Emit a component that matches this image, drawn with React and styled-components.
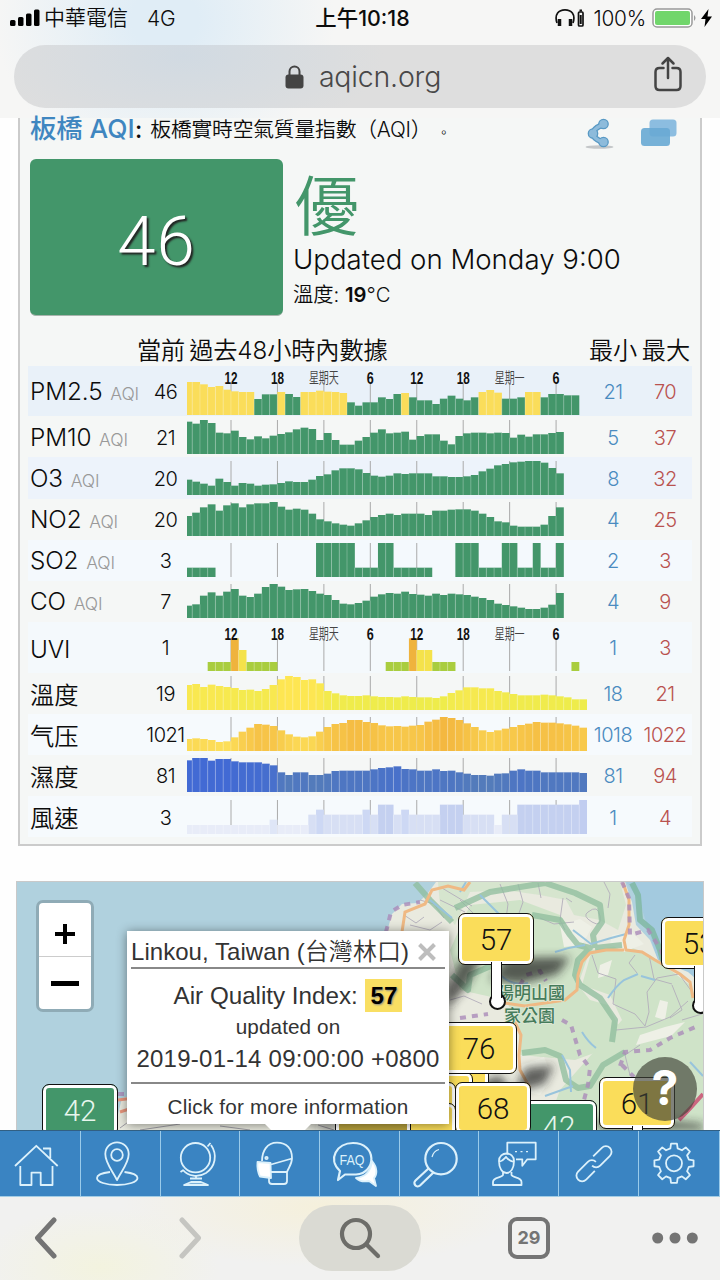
import React from "react";
import styled, { createGlobalStyle } from "styled-components";

const GREEN = "#43966a";
const YELLOW = "#fadd5a";
const BAR = 7.74;
const FIRST = 5.2;

const TICKS = ["12", "18", "星期天", "6", "12", "18", "星期一", "6"];

const so2 = [
  ...Array(4).fill(28), ...Array(13).fill(0), ...Array(5).fill(102), 28, 28, 28, 102, 102,
  ...Array(5).fill(28), 0, 0, 0, 102, 102, 102, 28, 28, 28, 102, 102, 28, 28, 102, 28, 28, 102,
];

const uvi = Array(52).fill(0);
[3, 4, 5, 8, 9, 10, 11, 26, 27, 28, 32, 33, 34, 50].forEach((i) => (uvi[i] = 27));
[6, 29].forEach((i) => (uvi[i] = 98));
[7, 30, 31].forEach((i) => (uvi[i] = 63));

const wind = [
  ...Array(11).fill(27), 43, ...Array(4).fill(27), 58, 73, ...Array(5).fill(58), 73, 58, 88, 88,
  58, 73, ...Array(4).fill(58), 88, 88, 88, ...Array(4).fill(58), 27, 58, 58, ...Array(8).fill(88), 103,
];

const mix = (from, to, min, max) => (v) => {
  const k = Math.max(0, Math.min(1, (v - min) / (max - min)));
  return `rgb(${from.map((c, i) => Math.round(c + (to[i] - c) * k)).join(",")})`;
};

const green = () => GREEN;
const windColor = (v) =>
  ({ 27: "#e8ecf8", 43: "#dfe6f7", 58: "#d7dff4", 73: "#cdd8f4", 88: "#c4d0f0", 103: "#c1cdf0" })[v];

const ROWS = [
  {
    name: "PM2.5", aqi: true, now: 46, min: 21, max: 70, ticks: true, bg: "#e9f1f9",
    color: (v) => (v > 63 ? YELLOW : GREEN),
    data: [99, 99, 92, 84, 87, 76, 71, 69, 69, 48, 62, 62, 69, 63, 54, 69, 69, 73, 70, 69, 66, 38, 28, 38, 38, 53, 48, 63, 66, 53, 44, 44, 33, 49, 58, 49, 44, 53, 69, 75, 67, 49, 49, 53, 69, 69, 53, 63, 63, 59, 59],
  },
  {
    name: "PM10", aqi: true, now: 21, min: 5, max: 37, color: green,
    data: [97, 91, 102, 93, 64, 62, 70, 51, 44, 53, 47, 55, 60, 65, 74, 79, 75, 42, 63, 42, 28, 28, 40, 51, 64, 74, 62, 64, 67, 43, 54, 59, 59, 40, 29, 54, 62, 64, 64, 62, 64, 63, 49, 58, 52, 59, 59, 63, 66],
  },
  {
    name: "O3", aqi: true, now: 20, min: 8, max: 32, bg: "#edf3fb", color: green,
    data: [46, 40, 34, 28, 49, 39, 28, 36, 34, 28, 31, 32, 36, 41, 39, 39, 46, 57, 62, 74, 80, 80, 77, 66, 58, 55, 58, 65, 63, 65, 65, 65, 56, 56, 54, 54, 56, 60, 71, 79, 89, 93, 98, 100, 103, 103, 97, 81, 65],
  },
  {
    name: "NO2", aqi: true, now: 20, min: 4, max: 25, color: green,
    data: [60, 70, 86, 95, 76, 92, 98, 86, 95, 98, 98, 102, 88, 79, 82, 79, 67, 50, 44, 38, 34, 31, 38, 47, 57, 63, 67, 63, 67, 67, 67, 63, 76, 76, 79, 80, 80, 76, 67, 57, 44, 41, 31, 28, 28, 28, 34, 60, 86],
  },
  { name: "SO2", aqi: true, now: 3, min: 2, max: 3, bg: "#f4f9fd", color: green, data: so2 },
  {
    name: "CO", aqi: true, now: 7, min: 4, max: 9, color: green,
    data: [37, 41, 67, 77, 67, 79, 87, 67, 63, 73, 93, 102, 94, 84, 86, 87, 81, 73, 69, 54, 43, 41, 45, 52, 64, 71, 75, 73, 79, 72, 70, 67, 73, 69, 73, 71, 69, 64, 60, 54, 43, 39, 35, 31, 27, 27, 31, 40, 75],
  },
  {
    name: "UVI", now: 1, min: 1, max: 3, ticks: true, bg: "#f4f9fc", data: uvi,
    color: (v) => (v > 90 ? "#efb33d" : v > 50 ? "#f4e24b" : "#a9cd3f"),
  },
  {
    name: "溫度", now: 19, min: 18, max: 21, color: mix([238, 236, 75], [254, 230, 82], 38, 95),
    data: [75, 78, 69, 76, 72, 69, 66, 60, 61, 57, 63, 75, 92, 102, 99, 90, 92, 80, 57, 50, 44, 42, 42, 44, 41, 39, 39, 38, 41, 39, 38, 38, 36, 41, 51, 59, 68, 68, 65, 65, 57, 53, 48, 44, 44, 44, 46, 44, 41, 38, 32, 32],
  },
  {
    name: "气压", now: 1021, min: 1018, max: 1022, bg: "#f6fafd",
    color: mix([252, 222, 88], [244, 184, 64], 30, 102),
    data: [36, 38, 36, 33, 27, 29, 41, 58, 70, 81, 79, 75, 62, 50, 43, 41, 44, 58, 72, 81, 84, 93, 93, 87, 84, 77, 74, 75, 73, 76, 78, 88, 94, 102, 99, 93, 83, 72, 62, 57, 62, 67, 72, 78, 82, 87, 85, 85, 83, 80, 76, 70],
  },
  {
    name: "濕度", now: 81, min: 81, max: 94, color: mix([84, 124, 186], [66, 106, 212], 49, 95),
    data: [95, 103, 103, 94, 99, 99, 92, 89, 89, 89, 85, 80, 59, 51, 59, 59, 51, 51, 55, 63, 64, 64, 64, 64, 68, 72, 74, 77, 69, 68, 64, 64, 68, 63, 64, 59, 55, 51, 51, 49, 55, 56, 64, 68, 64, 64, 59, 59, 59, 59, 59, 57],
  },
  { name: "風速", now: 3, min: 1, max: 4, bg: "#f6fafd", color: windColor, data: wind },
];

const Chart = ({ row }) => {
  const h = row.ticks ? 49 : 34;
  return (
    <ChartSvg width="400" height={h} $drop={row.ticks ? 1.3 : 3.6}>
      {TICKS.map((t, i) => (
        <line key={i} x1={44 + i * 46.44} x2={44 + i * 46.44} y1={row.ticks ? 17 : 0} y2={h} stroke="#aaa" />
      ))}
      {row.data.map((v, i) => {
        const x = i === 0 ? 0 : FIRST + (i - 1) * BAR;
        const w = i === 0 ? FIRST : BAR;
        if (!v) return null;
        return (
          <g key={i}>
            <rect x={x} y={h - v / 3} width={w + 0.1} height={v / 3} fill={row.color(v)} />
            {i > 0 && row.data[i - 1] > 0 && (
              <line x1={x} x2={x} y1={h - Math.min(v, row.data[i - 1]) / 3} y2={h} stroke="#fff" strokeOpacity="0.25" />
            )}
          </g>
        );
      })}
      {row.ticks &&
        TICKS.map((t, i) => {
          const day = t.length > 2;
          const w = day ? 30 : t.length === 2 ? 13 : 7;
          return (
            <TickText
              key={i} $day={day} x={44 + i * 46.44 - w / 2} y={day ? 16.5 : 18}
              textLength={w} lengthAdjust="spacingAndGlyphs"
            >
              {t}
            </TickText>
          );
        })}
    </ChartSvg>
  );
};

const gearPath = () => {
  const pts = [];
  for (let i = 0; i < 8; i++) {
    [[-0.24, 15.3], [-0.15, 19.8], [0.15, 19.8], [0.24, 15.3]].forEach(([d, r]) => {
      const a = (i * Math.PI) / 4 + d;
      pts.push(`${(35 + r * Math.sin(a)).toFixed(2)} ${(33.3 - r * Math.cos(a)).toFixed(2)}`);
    });
  }
  return `M${pts.join("L")}Z`;
};

const NavText = styled.text`
  font: 14px "Liberation Sans", sans-serif;
  fill: #dcf1fb;
  stroke: none;
`;

const NAV = [
  <path d="M15 36 36.3 15.8 57.7 36M43 18.5h7.3V28M20.3 36v19h11.2V42.6h9.2V55h11.8V36" />,
  <>
    <circle cx="36" cy="25" r="5.8" />
    <path d="M36 50C31 40 24.3 33 24.3 24a11.7 11.7 0 0 1 23.4 0C47.7 33 41 40 36 50Z" />
    <path d="M29 42c-8 1-13 3.3-13 6 0 4 9 7 20 7s20.5-3 20.5-7c0-2.7-5-5-13-6" />
  </>,
  <>
    <circle cx="34.5" cy="27.7" r="14.7" />
    <path d="M46.5 16.5 49.5 13M50 15C57 25 54 37 45 43 37 48 27 46 22 40M19.5 42l3-2" />
    <path d="M35 46v3M29 48.5h12M30 52l-7 3h24l-7-3Z" fill="#dcf1fb" fillOpacity=".4" />
  </>,
  <>
    <path d="M22 31c0-10 5-18.3 15-18.3S52 19 52 28c0 6-3 9-5 14v9q0 3-3 3H32q-3 0-3-3v-3M31 34.5l21-6M31 42h16" />
    <circle cx="26.5" cy="28" r="1.2" />
    <path d="M17.5 32l13 1 .5 15-11-1.5c-2-4-3-9-2.5-14.5Z" fill="#fff" />
  </>,
  <>
    <path d="M52 31c6 7 5 14 2 17l2 8-7-5c-5 1-10 0-13-3 9-1 15-7 16-17Z" fill="#fff" />
    <path d="M20 41C7 29 17 13 33 13c24 0 24 30 3 31.5l-11 0-7 5.5Z" fill="#3a84c2" strokeWidth="2.2" />
    <NavText x="19.5" y="35" textLength="25" lengthAdjust="spacingAndGlyphs">FAQ</NavText>
  </>,
  <>
    <circle cx="41" cy="28.7" r="15.7" strokeWidth="2.2" />
    <path d="M32 27c1-4 3-6.5 7-7.5" strokeWidth="1.2" />
    <path d="M29 38 15.5 50.5a3.3 3.3 0 0 0 4.5 5L33.5 42.5" strokeWidth="2.2" />
  </>,
  <>
    <path d="M28.3 24.5V12.7h28.4v16.6h-8.4l-5 6.4v-6.4H37" />
    <path d="M36 21.7h2M41.5 21.7h2M47 21.7h2" strokeWidth="1.2" />
    <path d="M20 31c0-10 15-10 15 0 0 7-3 12-7.5 12S20 38 20 31ZM20 32c4-1 6-4 7-5 2 3 5 4 8 5M24 42v3c-1 3-10 2-10 7v3h28.5v-3c0-5-9-4-10-7v-3" />
  </>,
  <g transform="rotate(-45 35 33.7)">
    <path d="M39.5 28H51.8a5.7 5.7 0 0 1 0 11.4H38a5.7 5.7 0 0 1-5.7-5.7M30.5 39.4H18.2a5.7 5.7 0 0 1 0-11.4H32a5.7 5.7 0 0 1 5.7 5.7" />
  </g>,
  <>
    <path d={gearPath()} />
    <circle cx="35" cy="33.3" r="8" />
  </>,
];

const MARKERS = [
  { x: 413, y: 1067, value: "" },
  { x: 397, y: 1072, value: "" },
  { x: 380, y: 1082, value: "" },
  { x: 380, y: 1103, value: "" },
  { x: 335, y: 1105, value: "", dim: true },
  { x: 458, y: 913, value: 57, pin: true },
  { x: 661, y: 917, value: 53, pin: true },
  { x: 441, y: 1022, value: 76 },
  { x: 521, y: 1100, value: 42, good: true },
  { x: 455, y: 1082, value: 68 },
  { x: 599, y: 1077, value: 61, pin: true },
  { x: 42, y: 1084, value: 42, good: true },
];

const MapArt = () => (
  <svg width="686" height="248" viewBox="17 882 686 248">
    <defs>
      <filter id="soft" x="-30%" y="-60%" width="160%" height="220%">
        <feGaussianBlur stdDeviation="5" />
      </filter>
    </defs>
    <path fill="#b0d1de" d="M17 882h686v248H17z" />
    <path fill="#a3cadf" d="M626 882h77v110l-45-30-18-60z" />
    <path fill="#e9eadf" d="M386 935 392 914 402 904 418 903 428 893 436 882H625L632 902 636 925 650 940 658 960 688 972 703 985V1130H114L122 1098 150 1092 440 1000Z" />
    <g fill="#cfe3c8">
      <path d="M438 882H620L626 905 618 930 600 920 574 915 566 900 540 895 505 890 470 892 455 925 440 905Z" opacity=".75" />
      <path d="M470 905 520 900 560 915 575 935 590 950 578 985 590 1000 608 1005 618 1025 608 1048 575 1060 520 1055 518 1020 505 1000 460 990 450 950Z" />
      <path d="M592 950 625 945 650 955 670 970 690 985 703 1010V1130H545L560 1090 600 1045 622 1020 610 995 582 985Z" />
    </g>
    <g fill="#eef0e6">
      <path d="M560 925l20-6 12 8-10 18-18 2zM612 935l20-3 12 12-20 8-14-8zM640 1035l25-8 20-5-14 14-35 9zM470 920l25 5 8 12-20 6-15-8zM600 965l12-5-4 15-10 3zM520 1065l24-8 8 20-12 18-22-4zM660 1000l8 2-3 18-10-3z" />
    </g>
    <g fill="none" stroke="#b3aebb" strokeWidth="1" opacity=".9">
      <path d="M404 915l12 8 8-6M410 925l20 5 12-8M420 900l14 4 10 14M440 900l25 12M442 888l30 18M460 900l18 18M500 884l8 20-2 15M518 884l5 18-5 14M538 883l3 15M563 898l-3 22 5 10M566 898l6 4M588 912q10-8 12 4t-8 6-4-10M604 882l6 12-2 14M540 918l14 6 20-2" />
      <path d="M592 955l6 18 18 6-3 25 22 10 10 12 4-14-2-20 10-14 22-4 16 22 7 18-20 6M649 955l5 24 18 5M616 1030l30-3 24-10 18-16M672 985l10 25-12 8M635 955l-6 8 8 10M450 1000l14-4 18 8M640 1045l-15 10 5 20" />
      <path d="M120 1128l30-22M140 1130l40-6M220 1126l30 4M318 1125l16 5" stroke="#96939c" />
    </g>
    <g fill="none" stroke="#8ebd9d" strokeWidth="6" strokeLinejoin="round" opacity=".75">
      <path d="M415 883 430 900 452 922M455 908 490 892 545 883M545 883 575 893 600 905 602 922 593 935 595 948M532 915 560 920 570 935 578 945 590 948 578 960 575 975 580 985 600 998 615 1020 612 1042" />
      <path d="M452 975 468 990 470 975 500 962 530 955M522 1053 545 1050 560 1056 566 1080 578 1088 590 1086 603 1065 625 1052M595 948 622 945" />
      <path d="M632 883 638 895 640 920 652 930 660 950 664 965" stroke="#7bb69c" />
    </g>
    <g fill="none" stroke="#98c4dc" strokeWidth="2">
      <path d="M430 900l22 18M480 895l20 20M555 952q15-5 30-7M573 930l18 14 20-6 15-4M562 1055l8 15 1 22M608 998q8-12 16-18l14-6M641 976l14 4M582 1032q6 10 14 16M500 975q14 12 28 8M545 1096l28-10M690 1062l13 14M466 882l-6 10" />
    </g>
    <g fill="none" stroke="#efb984" strokeWidth="3">
      <path d="M402 932 405 912 425 904 432 890 448 886 464 890 470 882M623 883 629 900 629 925 624 940 626 950 642 952 655 960 680 974 690 982 693 998M624 950 606 950 590 953 582 962 578 975 577 990 565 1000 525 1006 505 1003M514 1020 521 1035 519 1055 520 1070 530 1088" />
      <path d="M118 1100 150 1096M120 1112l24-8-4 18" stroke="#e7957c" />
    </g>
    <g fill="none" stroke="#aa8bb9" strokeWidth="4" strokeDasharray="6 6" opacity=".8">
      <path d="M386 932 391 912 402 905 420 902M622 882 629 898 630 935 648 930 660 948 665 960M562 1020 571 1025 580 1055 590 1068 588 1085 584 1100M620 1066 625 1052 650 1050 670 1038 700 1025M460 1018l28-4M520 985l6-10 14-4 6 10M622 1065l12 12M118 1094h40" />
    </g>
    <path d="M703 1094q-12 14-24 26" fill="none" stroke="#cc6680" strokeWidth="4" />
    <g filter="url(#soft)" fill="#222" opacity=".7">
      <path d="M490 980 506 958 570 957 558 974 520 984Z" />
      <path d="M446 990 460 960 482 958 468 984 448 1008Z" />
      <path d="M515 1092 525 1068 554 1065 545 1084Z" />
      <path d="M449 1095 500 1075 510 1090Z" />
      <path d="M310 1128 330 1124 343 1130ZM596 1128 603 1115 703 1124 703 1130Z" />
    </g>
    <PlaceText x="497" y="999">陽明山國</PlaceText>
    <PlaceText x="504" y="1022">家公園</PlaceText>
  </svg>
);

export default function App() {
  return (
    <>
      <Global />
      <Page>
        <Header>
          <StatusBar>
            <StatusSide>
              <svg width="30" height="18" viewBox="0 0 30 18">
                <rect x="0" y="11" width="5.5" height="6" rx="1.5" />
                <rect x="8" y="8" width="5.5" height="9" rx="1.5" />
                <rect x="16" y="4.5" width="5.5" height="12.5" rx="1.5" />
                <rect x="24" y="0.5" width="5.5" height="16.5" rx="1.5" />
              </svg>
              <Carrier>中華電信</Carrier>
              <Network>4G</Network>
            </StatusSide>
            <Clock>上午10:18</Clock>
            <StatusSide $end>
              <svg width="30" height="20" viewBox="0 0 30 20" fill="none" stroke="#111" strokeWidth="1.7">
                <path d="M2 15C-1 6 4 1.8 10 1.8S21 6 18 15" />
                <path d="M4.5 11v7M15.5 11v7" strokeWidth="3.5" />
                <rect x="23.5" y="4" width="4.5" height="14" rx="1" />
                <path d="M24.5 2.5h2.5M25.7 7v9" strokeWidth="2" />
              </svg>
              <Percent>100%</Percent>
              <svg width="49" height="20" viewBox="0 0 49 20">
                <rect x="1" y="1" width="39" height="18" rx="4" fill="#fff" stroke="#999" strokeWidth="1.5" />
                <rect x="3" y="3" width="35" height="14" rx="2" fill="#71d66b" />
                <path d="M42 7q3 3 0 6z" fill="#999" />
              </svg>
              <svg width="12" height="18" viewBox="0 0 12 18">
                <path d="M7.5 0 0 10h4.5L3.5 18 11 7.5H6.5z" />
              </svg>
            </StatusSide>
          </StatusBar>
          <AddressBar>
            <svg width="19" height="24" viewBox="0 0 19 24">
              <rect x="0.5" y="9.5" width="18" height="14" rx="3" fill="#444" />
              <path d="M4.5 10V6.5a5 5 0 0 1 10 0V10" fill="none" stroke="#444" strokeWidth="2" />
            </svg>
            <Url>aqicn.org</Url>
            <ShareButton>
              <svg width="28" height="36" viewBox="0 0 28 36" fill="none" stroke="#444" strokeWidth="2.5" strokeLinecap="round" strokeLinejoin="round">
                <path d="M9.5 12H5.5q-4 0-4 4v14q0 4 4 4h17q4 0 4-4V16q0-4-4-4h-4M14 22V2M8.5 7.5 14 2l5.5 5.5" />
              </svg>
            </ShareButton>
          </AddressBar>
        </Header>

        <Card>
          <TitleRow>
            <City>板橋 AQI</City>
            <Colon>:</Colon>
            <Subtitle>板橋實時空氣質量指數（AQI） <Stop>。</Stop></Subtitle>
            <TitleIcons>
              <svg width="30" height="32" viewBox="0 0 30 32">
                <ellipse cx="14.5" cy="29" rx="14" ry="1.8" fill="#c4c7c9" />
                <path d="M17 7Q8 11 8 15.5T17 24" fill="none" stroke="#5899c4" strokeWidth="6" />
                <g fill="#8dbbdb" stroke="#5899c4" strokeWidth="1.3">
                  <circle cx="18.5" cy="6" r="4.7" />
                  <circle cx="8" cy="15.5" r="4.7" />
                  <circle cx="18.5" cy="24" r="4.7" />
                </g>
                <path d="M17 7Q8 11 8 15.5T17 24" fill="none" stroke="#8dbbdb" strokeWidth="3.5" />
              </svg>
              <svg width="38" height="30" viewBox="0 0 38 30">
                <rect x="9.5" y="1.5" width="27" height="17" rx="3.5" fill="#8cbde0" />
                <rect x="1" y="10" width="29" height="18" rx="3.5" fill="#68a8d4" opacity=".9" />
              </svg>
            </TitleIcons>
          </TitleRow>
          <Summary>
            <AqiBox>46</AqiBox>
            <SummaryText>
              <Level>優</Level>
              <Updated>Updated on Monday 9:00</Updated>
              <Temp>溫度: <b>19</b>°C</Temp>
            </SummaryText>
          </Summary>
          <TableHead>
            <span>當前</span>
            <span>過去48小時內數據</span>
            <HeadEnd>最小 最大</HeadEnd>
          </TableHead>
          {ROWS.map((row) => (
            <Row key={row.name} $tall={row.ticks} $bg={row.bg}>
              <Name>
                {row.name} {row.aqi && <small>AQI</small>}
              </Name>
              <Value>{row.now}</Value>
              <Chart row={row} />
              <Value $color="#4a8bc0">{row.min}</Value>
              <Value $color="#b9524f">{row.max}</Value>
            </Row>
          ))}
        </Card>

        <MapBox>
          <MapArt />
          {MARKERS.map((m, i) => (
            <Marker key={i} style={{ left: m.x - 17, top: m.y - 882 }} $good={m.good} $dim={m.dim} $pin={m.pin}>
              {m.value}
            </Marker>
          ))}
          <Zoom>
            <ZoomButton>
              <svg width="20" height="20"><path d="M10 0v20M0 10h20" stroke="#000" strokeWidth="4" /></svg>
            </ZoomButton>
            <ZoomButton>
              <svg width="28" height="5"><path d="M0 2.5h28" stroke="#000" strokeWidth="5" /></svg>
            </ZoomButton>
          </Zoom>
          <Popup>
            <PopupTitle>
              Linkou, Taiwan (台灣林口)
              <svg width="18" height="18"><path d="M1.5 1.5l15 15M16.5 1.5l-15 15" stroke="#bdbdbd" strokeWidth="4" /></svg>
            </PopupTitle>
            <PopupIndex>Air Quality Index: <mark>57</mark></PopupIndex>
            <PopupSmall>updated on</PopupSmall>
            <PopupDate>2019-01-14 09:00:00 +0800</PopupDate>
            <PopupLink>Click for more information</PopupLink>
          </Popup>
          <Help>
            ?
            <HelpTail width="18" height="10" viewBox="0 0 18 10">
              <path d="M0 1 9 0q2 6 9 8-10 3-18-7z" fill="#5d6054" />
            </HelpTail>
          </Help>
        </MapBox>

        <Nav>
          {NAV.map((icon, i) => (
            <NavItem key={i}>
              <svg width="79" height="66" viewBox="0 1 79 66" fill="none" stroke="#dcf1fb" strokeWidth="1.8" strokeLinejoin="round">
                {icon}
              </svg>
            </NavItem>
          ))}
        </Nav>

        <Footer>
          <svg width="26" height="42" viewBox="0 0 26 42" fill="none" stroke="#747474" strokeWidth="5" strokeLinecap="round" strokeLinejoin="round">
            <path d="M20 3 3.5 21 20 39" />
          </svg>
          <ForwardIcon width="26" height="42" viewBox="0 0 26 42" fill="none" stroke="#c5c5c1" strokeWidth="5" strokeLinecap="round" strokeLinejoin="round">
            <path d="M5 3l16.5 18L5 39" />
          </ForwardIcon>
          <SearchPill>
            <svg width="42" height="42" viewBox="0 0 42 42" fill="none" stroke="#6d6d69" strokeWidth="4.2" strokeLinecap="round">
              <circle cx="17" cy="17" r="14" />
              <path d="M27.5 27.5 39 39" />
            </svg>
          </SearchPill>
          <Tabs>29</Tabs>
          <svg width="46" height="12" viewBox="0 0 46 12" fill="#747474">
            <circle cx="5.7" cy="6" r="5.5" />
            <circle cx="23" cy="6" r="5.5" />
            <circle cx="40.3" cy="6" r="5.5" />
          </svg>
        </Footer>
      </Page>
    </>
  );
}

const Global = createGlobalStyle`
  * { box-sizing: border-box; }
  body {
    margin: 0;
    background: #fefefe;
    font-family: Inter, "Noto Sans CJK TC", sans-serif;
    font-weight: 350;
    color: #0c0c0c;
  }
  svg { display: block; flex: none; }
`;

const Page = styled.div`
  width: 720px;
  height: 1280px;
  overflow: hidden;
  display: flex;
  flex-direction: column;
`;

const Header = styled.header`
  height: 118px;
  flex: none;
  background: radial-gradient(ellipse 170px 150px at 165px 20px, #e0edf6 20%, transparent), #f6f6f5;
`;

const StatusBar = styled.div`
  height: 45px;
  padding: 0 7px 9px 10px;
  display: grid;
  grid-template-columns: 1fr auto 1fr;
  align-items: center;
  white-space: nowrap;
`;

const StatusSide = styled.div`
  display: flex;
  align-items: center;
  justify-content: ${(p) => (p.$end ? "flex-end" : "flex-start")};
`;

const Carrier = styled.span`
  margin-left: 4px;
  font-size: 21px;
  line-height: 24px;
`;

const Network = styled.span`
  margin-left: 19px;
  font-size: 21px;
  letter-spacing: -0.3px;
`;

const Clock = styled.span`
  padding-left: 2px;
  font-size: 21.4px;
  font-weight: 500;
  line-height: 24px;
`;

const Percent = styled.span`
  margin: 0 6px 0 8px;
  font-size: 20.8px;
  letter-spacing: -0.2px;
`;

const AddressBar = styled.div`
  height: 63px;
  margin: 0 14px;
  padding-left: 6px;
  border-radius: 32px;
  background: radial-gradient(ellipse 200px 90px at 170px 10px, #d1dae2, transparent), #dedede;
  display: flex;
  align-items: center;
  justify-content: center;
  gap: 15px;
  position: relative;
`;

const Url = styled.span`
  padding-top: 1px;
  font-size: 28.5px;
  line-height: 34px;
  letter-spacing: -0.2px;
  color: #484848;
`;

const ShareButton = styled.div`
  position: absolute;
  right: 24px;
  top: 11px;
`;

const Card = styled.section`
  width: 684px;
  height: 728px;
  flex: none;
  margin-left: 18px;
  border: 2px solid #cbcbcb;
  border-top: 0;
  background: #f5f7f6;
  padding: 0 8px;
`;

const TitleRow = styled.div`
  height: 41px;
  padding: 0 14px 16px 2px;
  display: flex;
  align-items: center;
  white-space: nowrap;
`;

const City = styled.span`
  width: 105px;
  padding-bottom: 3px;
  font-size: 26.3px;
  line-height: 30px;
  font-weight: 500;
  color: #3f86c0;
`;

const Colon = styled.span`
  padding-bottom: 3px;
  font-size: 24px;
  font-weight: 500;
`;

const Subtitle = styled.span`
  margin-left: 8px;
  padding-top: 1px;
  font-size: 20.8px;
  line-height: 28px;
  letter-spacing: -0.2px;
`;

const Stop = styled.span`
  font-size: 13px;
`;

const TitleIcons = styled.div`
  margin-left: auto;
  padding-top: 6px;
  display: flex;
  gap: 25px;
`;

const Summary = styled.div`
  height: 157px;
  padding-left: 2px;
  display: flex;
  gap: 10px;
`;

const AqiBox = styled.div`
  width: 253px;
  height: 157px;
  border-radius: 6px;
  background: ${GREEN};
  border-bottom: 1px solid #a8b4ad;
  display: flex;
  align-items: center;
  justify-content: center;
  padding-top: 8px;
  color: #fff;
  font: 300 69px Roboto, sans-serif;
  letter-spacing: 1px;
  text-shadow: 2px 2px 2px #222;
`;

const SummaryText = styled.div`
  display: flex;
  flex-direction: column;
  white-space: nowrap;
`;

const Level = styled.div`
  height: 84px;
  margin-left: 1px;
  font-size: 65px;
  line-height: 96px;
  color: ${GREEN};
`;

const Updated = styled.div`
  height: 33px;
  font-size: 27.6px;
  line-height: 32px;
`;

const Temp = styled.div`
  font-size: 20.3px;
  line-height: 37px;

  b {
    font-weight: 600;
  }
`;

const TableHead = styled.div`
  height: 49.7px;
  padding: 20px 2px 0 109px;
  display: flex;
  gap: 4px;
  align-items: center;
  font-size: 24.2px;
  line-height: 28px;
  letter-spacing: -0.1px;
  white-space: nowrap;
`;

const HeadEnd = styled.span`
  margin-left: auto;
  word-spacing: -2px;
`;

const Row = styled.div`
  height: ${(p) => (p.$tall ? 50.6 : 41.15)}px;
  background: ${(p) => p.$bg || "transparent"};
  display: grid;
  grid-template-columns: 118px 39px 402px 52px 52px;
  align-items: center;
`;

const Name = styled.div`
  padding: 3px 0 0 2px;
  font-size: 24.3px;
  line-height: 32px;
  letter-spacing: -0.1px;
  white-space: nowrap;

  small {
    margin-left: 1px;
    font-size: 17.5px;
    color: #999;
  }
`;

const Value = styled.div`
  padding-top: 2px;
  text-align: center;
  font-size: 20px;
  letter-spacing: -0.5px;
  color: ${(p) => p.$color || "inherit"};
`;

const ChartSvg = styled.svg`
  align-self: end;
  margin-left: 2.3px;
  margin-bottom: ${(p) => p.$drop}px;
`;

const TickText = styled.text`
  font-family: "Liberation Sans", "Noto Sans CJK TC", sans-serif;
  font-size: ${(p) => (p.$day ? 15 : 16)}px;
  font-weight: ${(p) => (p.$day ? 350 : 700)};
  fill: ${(p) => (p.$day ? "#444" : "#111")};
`;

const MapBox = styled.section`
  width: 688px;
  height: 249px;
  flex: none;
  margin: 35px 0 0 16px;
  border: 1px solid #c9c9c9;
  border-bottom: 0;
  position: relative;
  overflow: hidden;
  font-family: "Liberation Sans", "Noto Sans CJK TC", sans-serif;
`;

const PlaceText = styled.text`
  font-size: 17px;
  font-weight: 500;
  fill: #467c5b;
  stroke: #dfe9d9;
  stroke-width: 1.5px;
  paint-order: stroke;
`;

const Marker = styled.div`
  position: absolute;
  width: 76px;
  height: 52px;
  border: 1.5px solid #111;
  border-radius: 7px;
  background: ${(p) => (p.$good ? GREEN : p.$dim ? "#b59f3c" : YELLOW)};
  box-shadow: inset 0 0 0 3px #fff;
  color: ${(p) => (p.$good ? "#e8f6ee" : "#111")};
  text-align: center;
  font: 300 29.5px/52px Roboto, sans-serif;

  &::before {
    content: "";
    display: ${(p) => (p.$pin ? "block" : "none")};
    position: absolute;
    left: 30px;
    top: 79px;
    width: 13px;
    height: 13px;
    border: 2px solid #111;
    border-radius: 50%;
    background: #fff;
  }

  &::after {
    content: "";
    display: ${(p) => (p.$pin ? "block" : "none")};
    position: absolute;
    left: 32px;
    top: 48px;
    width: 9px;
    height: 36px;
    border: solid #111;
    border-width: 0 1.5px;
    background: #fff;
  }
`;

const Zoom = styled.div`
  position: absolute;
  left: 19px;
  top: 18px;
  width: 58px;
  border: 3px solid #8fabb6;
  border-radius: 7px;
  background: #fff;
`;

const ZoomButton = styled.div`
  height: 53px;
  display: flex;
  align-items: center;
  justify-content: center;
  padding-top: 8px;

  & + & {
    border-top: 1px solid #ccc;
    padding-top: 0;
  }
`;

const Popup = styled.div`
  position: absolute;
  left: 110px;
  top: 49px;
  width: 322px;
  height: 193px;
  padding: 0 4px;
  background: #fff;
  box-shadow: 0 1px 10px rgba(0, 0, 0, 0.45);
  color: #333;
  text-align: center;
  white-space: nowrap;

  &::after {
    content: "";
    position: absolute;
    left: 138px;
    top: 193px;
    border: 23px solid transparent;
    border-top-color: #fff;
  }
`;

const PopupTitle = styled.div`
  height: 38px;
  border-bottom: 2px solid #888;
  display: flex;
  align-items: center;
  justify-content: space-between;
  padding: 5px 9px 0 0;
  font-size: 24px;
  line-height: 30px;
  letter-spacing: 0.05px;
`;

const PopupIndex = styled.div`
  height: 45px;
  padding-top: 10px;
  font-size: 24.2px;
  line-height: 34px;

  mark {
    display: inline-block;
    height: 33px;
    margin-left: 1px;
    padding: 0 5px;
    background: #f9df63;
    color: #000;
    font-weight: 700;
    text-shadow: 1px 1px 2px #888;
  }
`;

const PopupSmall = styled.div`
  font-size: 20.7px;
  line-height: 26px;
  letter-spacing: 0.1px;
`;

const PopupDate = styled.div`
  height: 44px;
  border-bottom: 2px solid #888;
  font-size: 24px;
  line-height: 38px;
  letter-spacing: 0.25px;
`;

const PopupLink = styled.div`
  font-size: 20.7px;
  line-height: 45px;
  letter-spacing: 0.2px;
`;

const Help = styled.div`
  position: absolute;
  left: 616px;
  top: 175px;
  width: 64px;
  height: 64px;
  border-radius: 50%;
  background: rgba(62, 65, 55, 0.66);
  color: #fff;
  text-align: center;
  font: 700 48px/62px Inter, sans-serif;
`;

const HelpTail = styled.svg`
  position: absolute;
  right: 5px;
  bottom: -2px;
  z-index: -1;
`;

const Nav = styled.nav`
  height: 67px;
  flex: none;
  display: grid;
  grid-template-columns: 81px repeat(7, 79.7px) 1fr;
  background: #3a84c2;
  border-top: 1px solid #315f83;
  border-bottom: 1px solid #a3cde5;
`;

const NavItem = styled.div`
  border-right: 1px solid #9acbea;
  overflow: hidden;
`;

const Footer = styled.footer`
  flex: 1;
  padding: 0 0 1px 34px;
  display: flex;
  align-items: center;
  background:
    radial-gradient(ellipse 120px 60px at 100px 70px, #f3f3df, transparent),
    radial-gradient(ellipse 200px 60px at 320px 10px, #f5f0dc, transparent),
    #f1f1f0;
`;

const ForwardIcon = styled.svg`
  margin-left: 117px;
`;

const SearchPill = styled.div`
  width: 122px;
  height: 66px;
  margin-left: 96px;
  border-radius: 33px;
  background: #dadad3;
  display: flex;
  align-items: center;
  justify-content: center;
`;

const Tabs = styled.div`
  width: 42px;
  height: 42px;
  margin: 0 102px 0 87px;
  border: 4px solid #747474;
  border-radius: 9px;
  color: #747474;
  font-size: 18px;
  font-weight: 700;
  line-height: 34px;
  text-align: center;
`;
